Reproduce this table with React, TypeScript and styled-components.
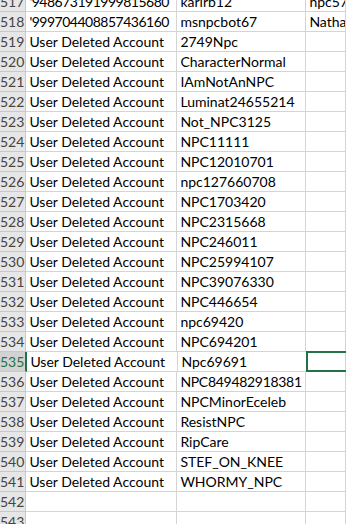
import React from 'react';
import styled, { createGlobalStyle } from 'styled-components';

const GlobalStyle = createGlobalStyle`
  html, body {
    margin: 0;
    padding: 0;
    background: #ffffff;
  }
  body {
    font-family: Lato, "Liberation Sans", Arial, sans-serif;
  }
`;

type RowData = { n: number; a: string; b: string; c?: string };

const rows: RowData[] = [
  { n: 517, a: "'948673191999815680", b: 'karirb12', c: 'npc579' },
  { n: 518, a: "'999704408857436160", b: 'msnpcbot67', c: 'Nathan' },
  { n: 519, a: 'User Deleted Account', b: '2749Npc' },
  { n: 520, a: 'User Deleted Account', b: 'CharacterNormal' },
  { n: 521, a: 'User Deleted Account', b: 'IAmNotAnNPC' },
  { n: 522, a: 'User Deleted Account', b: 'Luminat24655214' },
  { n: 523, a: 'User Deleted Account', b: 'Not_NPC3125' },
  { n: 524, a: 'User Deleted Account', b: 'NPC11111' },
  { n: 525, a: 'User Deleted Account', b: 'NPC12010701' },
  { n: 526, a: 'User Deleted Account', b: 'npc127660708' },
  { n: 527, a: 'User Deleted Account', b: 'NPC1703420' },
  { n: 528, a: 'User Deleted Account', b: 'NPC2315668' },
  { n: 529, a: 'User Deleted Account', b: 'NPC246011' },
  { n: 530, a: 'User Deleted Account', b: 'NPC25994107' },
  { n: 531, a: 'User Deleted Account', b: 'NPC39076330' },
  { n: 532, a: 'User Deleted Account', b: 'NPC446654' },
  { n: 533, a: 'User Deleted Account', b: 'npc69420' },
  { n: 534, a: 'User Deleted Account', b: 'NPC694201' },
  { n: 535, a: 'User Deleted Account', b: 'Npc69691' },
  { n: 536, a: 'User Deleted Account', b: 'NPC849482918381' },
  { n: 537, a: 'User Deleted Account', b: 'NPCMinorEceleb' },
  { n: 538, a: 'User Deleted Account', b: 'ResistNPC' },
  { n: 539, a: 'User Deleted Account', b: 'RipCare' },
  { n: 540, a: 'User Deleted Account', b: 'STEF_ON_KNEE' },
  { n: 541, a: 'User Deleted Account', b: 'WHORMY_NPC' },
  { n: 542, a: '', b: '' },
  { n: 543, a: '', b: '' },
];

const ACTIVE_ROW = 535;

// long digit runs are wider in Lato than in Calibri; squeeze them a little
const squeeze = (s: string) => (/\d{14,}/.test(s) ? 0.5 : /\d{10,}/.test(s) ? 0.3 : 0);

function App() {
  return (
    <>
      <GlobalStyle />
      <Sheet>
        <Grid>
          {rows.map((r) => {
            const active = r.n === ACTIVE_ROW;
            return (
              <Row key={r.n}>
                <RowHeader $selected={active}>{r.n}</RowHeader>
                <Cell $width={151} $squeeze={squeeze(r.a)}>{r.a}</Cell>
                <Cell $width={129} $squeeze={squeeze(r.b)}>{r.b}</Cell>
                <Cell $active={active}>{r.c}</Cell>
              </Row>
            );
          })}
        </Grid>
      </Sheet>
    </>
  );
}

export default App;

const Sheet = styled.div`
  width: 346px;
  height: 524px;
  overflow: hidden;
  background: #ffffff;
`;

const Grid = styled.div`
  display: flex;
  flex-direction: column;
  margin-top: -8px;
`;

const Row = styled.div`
  display: flex;
  flex-direction: row;
  height: 20px;
`;

const RowHeader = styled.div<{ $selected?: boolean }>`
  flex: 0 0 26px;
  box-sizing: border-box;
  height: 20px;
  padding: 0 1px 1px 0;
  display: flex;
  align-items: flex-end;
  justify-content: flex-end;
  font-size: 14px;
  line-height: 17px;
  color: ${(p) => (p.$selected ? '#217346' : '#444444')};
  background: ${(p) => (p.$selected ? '#d2d2d2' : '#e6e6e6')};
  border-bottom: 1px solid #c8c8c8;
  border-right: ${(p) => (p.$selected ? '2px solid #217346' : '1px solid #c8c8c8')};
`;

const Cell = styled.div<{ $width?: number; $active?: boolean; $squeeze?: number }>`
  position: relative;
  box-sizing: border-box;
  height: 20px;
  flex: ${(p) => (p.$width ? `0 0 ${p.$width}px` : '1 1 auto')};
  min-width: 0;
  padding: 0 2px 1px 3px;
  display: flex;
  align-items: flex-end;
  white-space: nowrap;
  overflow: hidden;
  font-size: 14px;
  line-height: 17px;
  letter-spacing: ${(p) => (p.$squeeze ? `-${p.$squeeze}px` : '0')};
  color: #000000;
  border-right: 1px solid #d4d4d4;
  border-bottom: 1px solid #d4d4d4;

  ${(p) =>
    p.$active &&
    `
    overflow: visible;
    &::after {
      content: '';
      position: absolute;
      left: -1px;
      top: -1px;
      right: -3px;
      bottom: -1px;
      border: 2px solid #217346;
    }
  `}
`;
